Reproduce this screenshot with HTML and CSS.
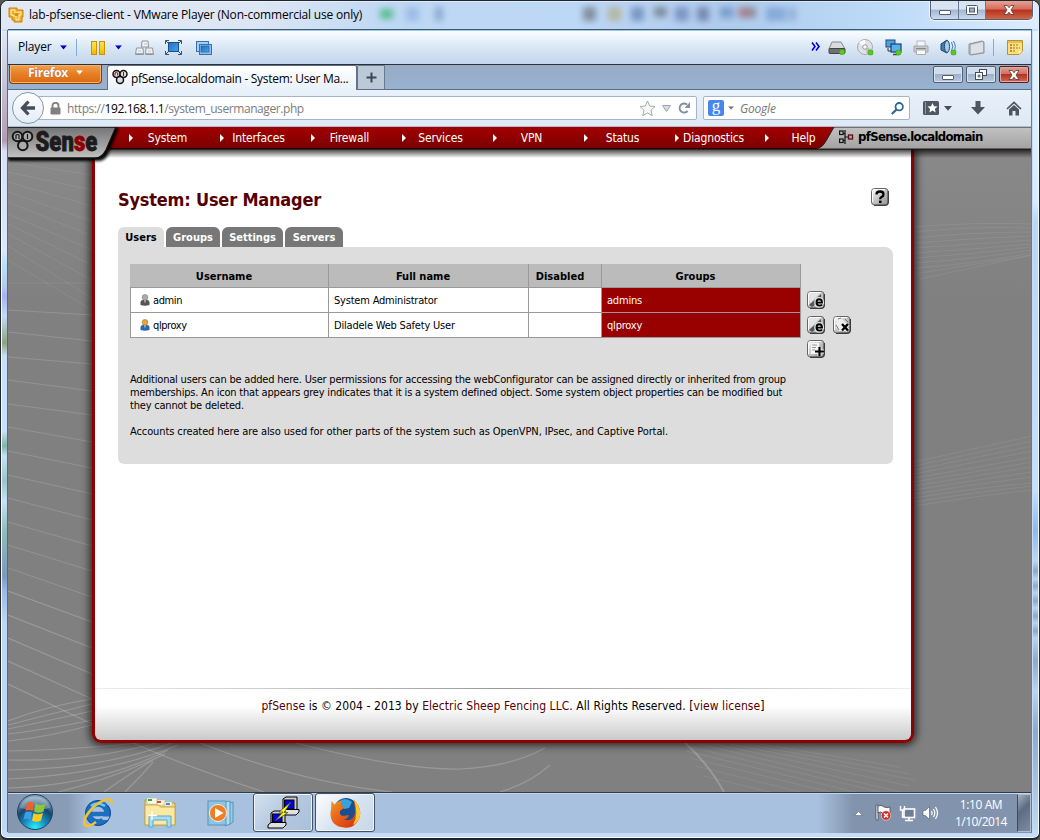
FILE: index.html
```html
<!DOCTYPE html>
<html lang="en">
<head>
<meta charset="utf-8">
<title>pfSense.localdomain - System: User Manager</title>
<link rel="stylesheet" href="styles.css">
</head>
<body>
<svg class="defs" width="0" height="0">
  <defs>
    <linearGradient id="btn" x1="0" y1="0" x2="1" y2="1"><stop offset="0" stop-color="#fff"/><stop offset=".5" stop-color="#c4c4c4"/><stop offset="1" stop-color="#8e8e8e"/></linearGradient>
    <linearGradient id="gold" x1="0" y1="0" x2="0" y2="1"><stop offset="0" stop-color="#ffe05a"/><stop offset=".5" stop-color="#ffd21c"/><stop offset="1" stop-color="#f0b400"/></linearGradient>
    <linearGradient id="blue" x1="0" y1="0" x2="1" y2="1"><stop offset="0" stop-color="#1b6fc0"/><stop offset="1" stop-color="#4aa3ec"/></linearGradient>
    <symbol id="plate" viewBox="0 0 18 18"><rect x=".5" y=".5" width="16.5" height="16.5" rx="3" fill="url(#btn)" stroke="#666"/><path d="M1.5 14V3.5Q1.5 1.500 3.500 1.500H14" fill="none" stroke="#fff"/><path d="M3 17.300H15Q17.300 17.300 17.300 15V3" fill="none" stroke="#222"/></symbol>
    <symbol id="edit" viewBox="0 0 18 18"><use href="#plate"/><path d="M2 14L14 3V7L9 13L5 16Z" fill="#555"/><path d="M2 2H13L3 12Z" fill="#e5e5e5"/><path d="M9 11.700H15.300C15.300 8.900 13.800 7.800 12.100 7.800C10.200 7.800 9 9.200 9 11.500C9 13.800 10.200 15 12.300 15C13.700 15 14.500 14.600 15.100 13.700" fill="none" stroke="#e4e4e4" stroke-width="3.600"/><path d="M9.500 11.600H15C15 9.200 13.800 8.300 12.200 8.300C10.500 8.300 9.500 9.500 9.500 11.500C9.500 13.500 10.600 14.600 12.400 14.600C13.600 14.600 14.400 14.300 15 13.600" fill="none" stroke="#000" stroke-width="1.900"/></symbol>
    <symbol id="cones" viewBox="0 0 16 16"><circle cx="4.500" cy="5" r="3.500" fill="#ddd" stroke="#111" stroke-width="1.500"/><circle cx="11.500" cy="5" r="3.500" fill="#ddd" stroke="#111" stroke-width="1.500"/><circle cx="8" cy="11" r="3.500" fill="#ddd" stroke="#111" stroke-width="1.500"/><path d="M3 6.500V4Q4.500 2.600 5.700 4V6.500" fill="none" stroke="#a00"/><path d="M11.500 3V7" stroke="#a00"/></symbol>
    <symbol id="user" viewBox="0 0 10 12"><path d="M.5 11V8Q.8 6 3 6H7Q9.200 6 9.500 8V11Q5 12.500 .5 11Z" fill="currentColor"/><path d="M4 6H6L5 9.500Z" fill="#ccc"/><circle cx="5" cy="3.300" r="2.900" fill="var(--head)" stroke="var(--rim)" stroke-width=".5"/></symbol>
    <symbol id="ok" viewBox="0 0 6 6"><circle cx="3" cy="3" r="2.800" fill="#5ac820" stroke="#368f10" stroke-width=".5"/></symbol>
    <symbol id="drop" viewBox="0 0 8 5"><path d="M0 0H8L4 4.800Z"/></symbol>
    <symbol id="cross" viewBox="0 0 12 10"><path d="M1 .5H4.200L6 2.700L7.800 .5H11L8 5L11 9.500H7.800L6 7.200L4.200 9.500H1L4 5Z" fill="#fff" stroke="#5a3537" stroke-width=".8"/></symbol>
  </defs>
</svg>

<div class="window">
  <i class="edge edge-l"></i><i class="edge edge-r"></i>
  <header class="titlebar">
    <i class="smudge s1"></i><i class="smudge s2"></i><i class="smudge s3"></i><i class="smudge s4"></i><i class="smudge s5"></i><i class="smudge s6"></i><i class="smudge s7"></i><i class="smudge s8"></i><i class="smudge s9"></i><i class="smudge s10"></i>
    <svg class="vm-logo" width="16" height="16" viewBox="0 0 16 16"><path d="M1 1H9V3H15V10H14V15H6V13H4V10H1Z" fill="#f2ad22" stroke="#c8810a"/><path d="M3 3H7V6H10V5H13V8H11V13H8V9H5V8H3Z" fill="none" stroke="#fff3c9"/><rect x="7" y="6" width="3" height="3" fill="#d98f10"/></svg>
    <span class="window-title">lab-pfsense-client - VMware Player (Non-commercial use only)</span>
    <div class="caption">
      <span class="cap cap-min"><i class="dash"></i></span>
      <span class="cap cap-max"><svg width="12" height="10" viewBox="0 0 12 10"><rect x=".5" y=".5" width="11" height="9" rx="1" fill="#fff" stroke="#505a6a"/><rect x="3.500" y="3" width="5" height="4" fill="#9ab0cc" stroke="#505a6a"/></svg></span>
      <span class="cap cap-close"><svg width="12" height="10" viewBox="0 0 12 10"><use href="#cross"/></svg></span>
    </div>
  </header>

  <div class="client">
    <div class="toolbar">
      <span class="player">Player</span>
      <svg class="t-drop" width="7" height="5" viewBox="0 0 8 5"><use href="#drop"/></svg>
      <i class="sep"></i>
      <svg class="t-pause" width="15" height="14" viewBox="0 0 15 14"><g fill="url(#gold)" stroke="#c89108"><rect x=".5" y=".5" width="5" height="13"/><rect x="8.500" y=".5" width="5" height="13"/></g></svg>
      <svg class="t-drop2" width="7" height="5" viewBox="0 0 8 5"><use href="#drop"/></svg>
      <svg class="t-keys" width="19" height="16" viewBox="0 0 19 16"><g fill="#f0f1f2" stroke="#90959b"><path d="M7 1H13L13.500 7H6.500Z"/><path d="M1.500 8H8L8.500 14.500H.5Z"/><path d="M11 8H17.500L18.500 14.500H10.500Z"/></g><path d="M1 13.500H8M11 13.500H18" stroke="#a5aab0"/><path d="M9 4H12M3 11H6M13 11H16" stroke="#c0c4c8"/></svg>
      <svg class="t-full" width="17" height="15" viewBox="0 0 17 15"><rect x="3.500" y="2.500" width="10" height="9" fill="url(#blue)" stroke="#174f8a"/><path d="M.5 4V.5H4M13 .5H16.500V4M16.500 11V14.500H13M4 14.500H.5V11M1 1L3 3M16 1L14 3M16 14L14 12M1 14L3 12" fill="none" stroke="#3d4e60"/></svg>
      <svg width="16" height="14" viewBox="0 0 16 14"><rect x=".5" y=".5" width="12" height="10" fill="#a8cdee" stroke="#3673ae"/><rect x="3.500" y="3.500" width="12" height="10" fill="#8cbce8" stroke="#3673ae"/><rect x="5" y="5" width="8" height="6" fill="url(#blue)" stroke="#1d5a98" stroke-width=".6"/></svg>
      <div class="devices">
        <svg class="chev" width="9" height="9" viewBox="0 0 9 9"><path d="M1 .5L4 4.500L1 8.500M5 .5L8 4.500L5 8.500" fill="none" stroke="#0000e0" stroke-width="1.600"/></svg>
        <svg width="18" height="16" viewBox="0 0 18 16"><path d="M4 2H13L17 9H1Z" fill="#d9dbdd" stroke="#888"/><rect x="1" y="8.500" width="16" height="5" rx="1" fill="#6e7276" stroke="#444"/><use href="#ok" x="11" y="9" width="6" height="6"/></svg>
        <svg width="17" height="17" viewBox="0 0 17 17"><circle cx="8" cy="8" r="7.500" fill="#e0e2e4" stroke="#a7abaf"/><path d="M8 8L2 3.500Q4 1 8 1Z" fill="#fff"/><path d="M8 8L15 10Q13 14 10 15Z" fill="#bfc3c7"/><circle cx="8" cy="8" r="2.300" fill="#f8f8f8" stroke="#999"/><use href="#ok" x="10.500" y="10.500" width="6" height="6"/></svg>
        <svg width="17" height="17" viewBox="0 0 17 17"><rect x="1" y="1" width="9" height="7" fill="#4ca0e4" stroke="#20486e"/><path d="M3 9V12H6" fill="none" stroke="#333"/><rect x="6" y="5" width="10" height="8" fill="#59b0f0" stroke="#203f60" stroke-width="1.200"/><path d="M8 15.500H14" stroke="#445" stroke-width="1.500"/><use href="#ok" x="10.500" y="10.500" width="6" height="6"/></svg>
        <svg width="16" height="16" viewBox="0 0 16 16"><rect x="4" y="1" width="8" height="6" fill="#f7f7f7" stroke="#b4b8bd"/><path d="M1 6H15V12H1Z" fill="#c7cacd" stroke="#a4a8ad"/><path d="M3.500 10H12.500V14.500H3.500Z" fill="#fafafa" stroke="#a9adb1"/><path d="M3 8.500H13" stroke="#888"/></svg>
        <svg width="17" height="17" viewBox="0 0 17 17"><path d="M1 5L7 1Q10 8 7 14L1 11Z" fill="#3e7db6" stroke="#1b4469"/><ellipse cx="7" cy="7.500" rx="2.500" ry="6" fill="#a9cde9" stroke="#234b70"/><path d="M11.500 3Q14 7.500 11.500 12M13.500 2Q17 8 13.500 13" fill="none" stroke="#3e80ba"/><use href="#ok" x="10.500" y="10.500" width="6" height="6"/></svg>
        <svg width="17" height="16" viewBox="0 0 17 16"><path d="M1 4L14 1L16 2V13L3 15L1 14Z" fill="#b3b8bd" stroke="#8d949b"/><path d="M3 5L15 2V12L3 14Z" fill="#dde1e4"/></svg>
        <i class="sep dark"></i>
        <svg width="16" height="15" viewBox="0 0 16 15"><path d="M.5.5H15.500V11L12 14.500H.5Z" fill="#fbe07c" stroke="#b09337"/><path d="M1 1H15V3H1Z" fill="#e6c04d"/><path d="M3 5H5M3 8H5M3 11H5" stroke="#dd5a2c" stroke-width="1.300"/><path d="M6 5H12M6 8H13M6 11H9" stroke="#8a7a48" stroke-dasharray="2 1"/><path d="M12 14V11H15Z" fill="#fff6c0"/></svg>
      </div>
    </div>

    <div class="tabstrip">
      <span class="firefox-button">Firefox <svg width="7" height="5" viewBox="0 0 8 5"><use href="#drop"/></svg></span>
      <span class="browser-tab"><svg width="16" height="16"><use href="#cones"/></svg><span>pfSense.localdomain - System: User Ma...</span></span>
      <span class="new-tab"><svg width="11" height="11" viewBox="0 0 11 11"><path d="M5.500 .5V10.500M.5 5.500H10.500" stroke="#3c4650" stroke-width="2"/></svg></span>
      <div class="inner-caption">
        <span class="icap"><i class="dash"></i></span>
        <span class="icap"><svg width="12" height="11" viewBox="0 0 12 11"><g fill="#fff" stroke="#414c5c"><rect x="4.500" y=".5" width="7" height="6"/><rect x=".5" y="3.500" width="7" height="7"/></g><rect x="3" y="6" width="2" height="2" fill="#8da5bf" stroke="#414c5c" stroke-width=".6"/></svg></span>
        <span class="icap iclose"><svg width="12" height="10" viewBox="0 0 12 10"><use href="#cross"/></svg></span>
      </div>
    </div>

    <div class="navbar">
      <div class="location">
        <svg class="lock" width="11" height="13" viewBox="0 0 11 13"><path d="M2.500 6V3.800A3 3 0 0 1 8.500 3.800V6" fill="none" stroke="#808080" stroke-width="1.800"/><rect x=".5" y="5.500" width="10" height="7" rx="1" fill="#808080"/></svg>
        <span class="url">https://<b>192.168.1.1</b>/system_usermanager.php</span>
        <svg class="star" width="17" height="17" viewBox="0 0 17 17"><path d="M8.500 1L10.700 6L16 6.500L12 10.200L13.200 15.700L8.500 12.900L3.800 15.700L5 10.200L1 6.500L6.300 6Z" fill="#f6f7f8" stroke="#a3a9b0"/></svg>
        <svg class="hist" width="9" height="7" viewBox="0 0 9 7"><path d="M.5 .5H8.500L4.500 6.500Z" fill="#d6dce4" stroke="#9aa5b2"/></svg>
        <svg class="reload" width="13" height="12" viewBox="0 0 13 12"><path d="M9 2.600A4.500 4.500 0 1 0 9.600 9" fill="none" stroke="#8390a0" stroke-width="2"/><path d="M12 0V6H6.500Z" fill="#8390a0"/></svg>
      </div>
      <span class="back"><svg width="16" height="16" viewBox="0 0 16 16"><path d="M8.500 1.500L2.500 8L8.500 14.500M3 8H15" fill="none" stroke="#434e5a" stroke-width="3.300"/></svg></span>
      <div class="search">
        <span class="g-logo">g</span>
        <svg class="g-drop" width="6" height="4" viewBox="0 0 8 5"><use href="#drop"/></svg>
        <span class="g-text">Google</span>
        <svg class="lens" width="13" height="13" viewBox="0 0 13 13"><circle cx="8.200" cy="4.700" r="3.700" fill="none" stroke="#2d6798" stroke-width="1.800"/><path d="M5.500 7.500L.8 12" stroke="#2d6798" stroke-width="2.200"/></svg>
      </div>
      <svg class="n-book" width="16" height="14" viewBox="0 0 16 14"><rect width="16" height="14" rx="1.500" fill="#4d5863"/><path d="M2.500 1V13" stroke="#8f99a3"/><path d="M9.500 2L11 5.300L14.500 5.600L11.900 8L12.700 11.500L9.500 9.600L6.300 11.500L7.100 8L4.500 5.600L8 5.300Z" fill="#fff"/></svg>
      <svg class="n-bdrop" width="8" height="5" viewBox="0 0 8 5"><use href="#drop"/></svg>
      <svg class="n-down" width="14" height="14" viewBox="0 0 14 14"><path d="M4.500 0H9.500V6H14L7 13.500L0 6H4.500Z" fill="#4b5661"/></svg>
      <svg class="n-home" width="16" height="15" viewBox="0 0 16 15"><path d="M1 8L8 1.500L15 8" fill="none" stroke="#4b5661" stroke-width="1.700"/><path d="M3 8.500L8 4L13 8.500V14.500H9.500V10H6.500V14.500H3Z" fill="#4b5661"/></svg>
    </div>

    <main class="page">
      <svg class="swirl" width="1024" height="665" viewBox="8 127 1024 665">
        <g fill="none" stroke="#fff" stroke-opacity=".08">
          <path d="M8 162L92 175M8 172L92 190M8 182L92 206M8 192L92 221M8 202L92 236M8 214L92 250M8 224L92 265M8 234L92 280M8 246L92 298M8 260L92 310M8 283H92"/>
          <path d="M914 227Q970 222 1032 224M914 232Q970 226 1032 228M914 238Q975 232 1032 232M914 243Q975 238 1032 236M914 248Q975 244 1032 240M914 253Q975 249 1032 244M914 258Q975 254 1032 247M914 263Q975 259 1032 250M914 268Q975 264 1032 253M914 274L1032 255M920 279L1032 255"/>
          <path d="M914 462L1032 436M914 466L1032 441M914 470L1032 446M914 474L1032 451M914 478Q975 468 1032 457M914 482Q975 472 1032 462M914 486Q975 476 1032 467M914 490Q975 480 1032 472M914 494Q975 484 1032 477M914 498Q975 488 1032 483M914 502Q975 492 1032 486M914 506Q975 496 1032 490"/>
          <path d="M700 744L900 792M715 744L910 786M730 744L915 780M745 744L910 774M760 744L900 767M690 747L880 792M686 751L855 792M690 758L830 792M696 766L800 792M704 776L770 792"/>
        </g>
        <g fill="none" stroke="#fff" stroke-opacity=".15">
          <path d="M8 310L92 315M8 332L92 341M8 357L92 364M8 380L92 391M8 404L92 415M8 427L92 442M8 451L92 468M8 475L92 494M8 498L92 520M8 522L92 546M8 545L92 571M8 568L92 597"/>
        </g>
        <g fill="none" stroke="#fff" stroke-opacity=".2" stroke-width="1.200">
          <path d="M8 591L92 622M8 615L92 648M8 638L92 674M8 661L92 699M8 684L92 724Q160 758 264 792M200 743Q300 782 392 792M292 742Q400 770 460 769Q510 767 545 748M500 792Q530 783 550 765"/>
          <path d="M8 721Q46 706 92 699M8 725Q50 714 92 704M8 729Q52 720 92 711M8 734Q50 729 92 720M8 741Q50 737 95 724M8 751Q88 749 145 742M8 760Q90 762 160 742M8 770Q102 769 172 743M8 779Q110 774 178 745M8 788Q100 785 168 750M58 792Q112 779 165 754M104 792Q138 768 160 756M125 792Q142 775 153 762"/>
          <path d="M684 742Q708 763 724 792" stroke-width="2"/>
        </g>
      </svg>
      <div class="pf-head">
        <svg class="pf-bar" width="1024" height="40" viewBox="0 0 1024 40">
          <defs>
            <linearGradient id="red" x1="0" y1="0" x2="0" y2="1"><stop offset="0" stop-color="#a00000"/><stop offset=".55" stop-color="#8f0000"/><stop offset="1" stop-color="#780000"/></linearGradient>
            <linearGradient id="grey" x1="0" y1="0" x2="0" y2="1"><stop offset="0" stop-color="#c2c2c2"/><stop offset="1" stop-color="#a2a2a2"/></linearGradient>
            <linearGradient id="badge" x1="0" y1="0" x2="0" y2="1"><stop offset="0" stop-color="#737373"/><stop offset="1" stop-color="#c2c2c2"/></linearGradient>
            <linearGradient id="shade" x1="0" y1="0" x2="0" y2="1"><stop offset="0" stop-color="#000" stop-opacity=".85"/><stop offset="1" stop-color="#000" stop-opacity="0"/></linearGradient>
            <filter id="soft" x="-10%" y="-10%" width="120%" height="140%"><feGaussianBlur stdDeviation="1.800"/></filter>
          </defs>
          <rect y="21" width="1024" height="10" fill="url(#shade)"/>
          <rect width="1024" height="21" fill="url(#red)"/><rect y="21" width="1024" height="1.500" fill="#260000"/>
          <path d="M809 22Q815 20 818 14L826 0H1025V22Z" fill="url(#grey)" stroke="#222"/>
          <path d="M0 1H111L101 25Q98 34 90 34H0Z" filter="url(#soft)"/>
          <path d="M-1 0H108L98 23Q94 31 87 31H-1Z" fill="url(#badge)" stroke="#111" stroke-width="1.400"/>
          <g fill="#aaa" stroke="#151515" stroke-width="2"><circle cx="9.500" cy="9.500" r="4.800"/><circle cx="19.500" cy="9.500" r="4.800"/><circle cx="14.800" cy="18.500" r="4.800"/></g>
          <path d="M8 12V8Q9.500 7 11 8V12M19.500 7V12" fill="none" stroke="#151515" stroke-width="1.200"/>
          <text class="logo-word" transform="translate(27.500 23.500) scale(.82 1)">Sen<tspan fill="#8c0000" stroke="#8c0000">s</tspan>e</text>
        </svg>
        <nav class="menu"><a>System</a><a>Interfaces</a><a>Firewall</a><a>Services</a><a>VPN</a><a>Status</a><a>Diagnostics</a><a>Help</a></nav>
        <div class="host"><svg width="15" height="14" viewBox="0 0 15 14"><path d="M6 0V14M6 7H10M1 3.500H6M1 10.500H6" fill="none" stroke="#111" stroke-width="1.200"/><g fill="#bbb" stroke="#111" stroke-width="1.200"><rect x=".6" y="1" width="3.500" height="3.500"/><rect x=".6" y="9" width="3.500" height="3.500"/></g><rect x="9.500" y="5" width="4" height="4" fill="#d99" stroke="#511" stroke-width="1.300"/></svg><span>pfSense.localdomain</span></div>
      </div>

      <section class="sheet">
        <div class="heading">
          <h1>System: User Manager</h1>
          <svg width="18" height="18" viewBox="0 0 18 18"><use href="#plate"/><path d="M5.500 6.500Q5.500 3.500 9 3.500Q12.500 3.500 12.500 6.500Q12.500 8.200 10.500 9Q9.200 9.600 9.200 11.300" fill="none" stroke="#000" stroke-width="2.300"/><rect x="8" y="12.600" width="2.500" height="2.500"/></svg>
        </div>
        <div class="tabs"><span class="on">Users</span><span>Groups</span><span>Settings</span><span>Servers</span></div>
        <div class="panel">
          <div class="users">
            <table>
              <colgroup><col class="c1"><col class="c2"><col class="c3"><col class="c4"></colgroup>
              <tr><th>Username</th><th>Full name</th><th class="dis">Disabled</th><th>Groups</th></tr>
              <tr><td class="name"><svg class="sys" width="10" height="12"><use href="#user"/></svg>admin</td><td>System Administrator</td><td></td><td class="grp">admins</td></tr>
              <tr><td class="name"><svg class="reg" width="10" height="12"><use href="#user"/></svg>qlproxy</td><td>Diladele Web Safety User</td><td></td><td class="grp">qlproxy</td></tr>
            </table>
            <div class="actions">
              <div><svg width="18" height="18"><use href="#edit"/></svg></div>
              <div><svg width="18" height="18"><use href="#edit"/></svg><svg width="18" height="18" viewBox="0 0 18 18"><use href="#plate"/><path d="M4 3H9L14 8V15H6L3 12Z" fill="#eee"/><path d="M5 3L8 2M12 3L15 6M3 9L6 14" stroke="#777"/><path d="M9 8L15 14.500M15 8L9 14.500" stroke="#eee" stroke-width="4.500"/><path d="M9 8L15 14.500M15 8L9 14.500" stroke="#000" stroke-width="2.400"/></svg></div>
              <div><svg width="18" height="18" viewBox="0 0 18 18"><use href="#plate"/><path d="M4 3H12V14H4Z" fill="#f7f7f7"/><path d="M5 5H10M5 7.500H9M5 10H8" stroke="#999"/><path d="M8 11.500H17M12.500 7V16" stroke="#eee" stroke-width="4"/><path d="M8 11.500H17M12.500 7V16" stroke="#000" stroke-width="2.200"/></svg></div>
            </div>
          </div>
          <p class="note">Additional users can be added here. User permissions for accessing the webConfigurator can be assigned directly or inherited from group<br>memberships. An icon that appears grey indicates that it is a system defined object. Some system object properties can be modified but<br>they cannot be deleted.</p>
          <p class="note accounts">Accounts created here are also used for other parts of the system such as OpenVPN, IPsec, and Captive Portal.</p>
        </div>
        <footer><a>pfSense</a> is © 2004 - 2013 by <a>Electric Sheep Fencing LLC</a>. All Rights Reserved. [<a>view license</a>]</footer>
      </section>
    </main>

    <div class="taskbar">
      <svg class="orb" width="38" height="38" viewBox="0 0 38 38"><defs><radialGradient id="orbg" cx=".5" cy=".95" r=".85"><stop offset="0" stop-color="#2ff0ff"/><stop offset=".35" stop-color="#1593c8"/><stop offset=".7" stop-color="#16466e"/><stop offset="1" stop-color="#7f9fb8"/></radialGradient></defs><circle cx="19" cy="19" r="17.500" fill="url(#orbg)" stroke="#24415e"/><path d="M4 15A15.500 15.500 0 0 1 34 15Q19 19 4 15Z" fill="#fff" opacity=".25"/><path d="M11 10Q14.500 8 18 10L16.500 18Q13 16 9.500 18Z" fill="#f0602a"/><path d="M19.500 10.500Q23.500 13 29.500 11L27.500 18.500Q22.500 21 18 18.500Z" fill="#8cc63c"/><path d="M9 19.500Q12.500 17.500 16 19.500L14.500 27Q11 25 7.500 26.500Z" fill="#3e9ce8"/><path d="M17.600 20Q21.500 22.500 27 20L25 27.500Q20.500 30 16 27.500Z" fill="#fcc91d"/></svg>
      <svg class="ie" width="34" height="32" viewBox="0 0 34 32"><circle cx="17" cy="16" r="9.500" fill="none" stroke="#1c6fc0" stroke-width="6.500"/><path d="M8 17H29" stroke="#1c6fc0" stroke-width="4.500"/><path d="M19 19.500H31V23H22Z" fill="#a8c1de"/><circle cx="17" cy="16" r="12.500" fill="none" stroke="#0d4b94" stroke-dasharray="64 6 10"/><path d="M10 9Q16 4 24 9" fill="none" stroke="#6cc7f5" stroke-width="2.500"/><path d="M31 6Q31 1 24 3C12 7 0 23 4 28Q7 31 15 25" fill="none" stroke="#f2c230" stroke-width="2.600"/></svg>
      <svg class="folder" width="34" height="30" viewBox="0 0 34 30"><path d="M2 2H12L14 5H32V27H2Z" fill="#f0d98a" stroke="#b89a48"/><path d="M4 0H14V6H4ZM14 2H22V7H14ZM21 4H29V8H21Z" fill="#fffdf0" stroke="#cdb876" stroke-width=".6"/><path d="M5 2H9" stroke="#2ea84a" stroke-width="2"/><path d="M14 4H18" stroke="#d44" stroke-width="2"/><path d="M23 6H27" stroke="#3a8ed8" stroke-width="2"/><path d="M2 7H15L18 9H32V27H2Z" fill="#fae9a2" stroke="#c7a950"/><path d="M6 29V18H28V29H24V22H10V29Z" fill="#a8dcf2" stroke="#5fa7cb"/><path d="M9 13V22M5 17.500H14" stroke="#fff" stroke-width="1.300"/></svg>
      <svg class="media" width="30" height="28" viewBox="0 0 30 28"><path d="M22 4L26 3V23L22 26Z" fill="#9acbe4" stroke="#5796b8"/><path d="M18 3L23 2V25L18 27Z" fill="#b5ddf0" stroke="#5796b8"/><rect x="1" y="2" width="18" height="24" fill="#8dc4e2" stroke="#5796b8"/><circle cx="11" cy="14" r="8.500" fill="#f47c20" stroke="#fff" stroke-width=".8"/><path d="M8 9L16.500 14L8 19Z" fill="#fff"/></svg>
      <span class="task putty"><svg width="33" height="33" viewBox="0 0 33 33"><g stroke="#000"><path d="M16 3L19 1H30V13L27 15H16Z" fill="#ccc"/><rect x="17.500" y="4" width="9.500" height="9" fill="#0000e0"/><path d="M15 16L18 13.500H32V16L29 19H15Z" fill="#e0e0e0"/><path d="M4 17L7 15H18V26L15 28H4Z" fill="#ccc"/><rect x="5.500" y="18" width="9.500" height="8" fill="#0000e0"/><path d="M1 29L4 26.500H19V29L16 32H1Z" fill="#e0e0e0"/></g><path d="M24 6L12 16H16L8 25L21 16.500H17Z" fill="#ff0" stroke="#444" stroke-width=".7"/></svg></span>
      <span class="task fox"><svg width="32" height="32" viewBox="0 0 32 32"><defs><linearGradient id="fur" x1="0" y1="0" x2="1" y2="1"><stop offset="0" stop-color="#f49a20"/><stop offset=".5" stop-color="#e85a18"/><stop offset="1" stop-color="#c82e16"/></linearGradient></defs><circle cx="17" cy="13" r="12" fill="#184f90"/><path d="M9 5Q16-1 23 5L20 11L15 12Z" fill="#3aa2da"/><path d="M25 3Q34 12 30 22Q25 32 15 30.500C4 30 0 21 2 13L2.500 4L6 8Q8 4 12 4L12 9L16 10L11 14Q10 20 17 18.500L20 18Q19 22 15 22.500C20 25 26 21 26 15Q26 9 25 3Z" fill="url(#fur)"/><path d="M25 3Q34 12 30 22Q28 26 24 28Q30 17 25 3Z" fill="#fbc92c"/></svg></span>
      <div class="tray">
        <svg class="up" width="9" height="5" viewBox="0 0 9 5"><path d="M.5 4.500L4.500 .5L8.500 4.500Z" fill="#fff" stroke="#59687c" stroke-width=".6"/></svg>
        <svg class="flag" width="17" height="18" viewBox="0 0 17 18"><path d="M1 1H3V16H1Z" fill="#fff" stroke="#3c4656" stroke-width=".8"/><path d="M3 2Q6 0 9 3Q12 4 15 3V10Q11 12 8 9Q5 7 3 9Z" fill="#fff" stroke="#3c4656" stroke-width=".8"/><circle cx="11" cy="11.500" r="4.700" fill="#d9291e" stroke="#fff" stroke-width=".5"/><path d="M9 9.500L13 13.500M13 9.500L9 13.500" stroke="#fff" stroke-width="1.600"/></svg>
        <svg class="net" width="17" height="17" viewBox="0 0 17 17"><rect x="5" y="4" width="10.500" height="8.500" fill="#6d7d92" stroke="#fff" stroke-width="1.600"/><path d="M10 13V15.500M6 15.500H14" stroke="#fff" stroke-width="1.500"/><path d="M1.500 1V5H5.500V1M3.500 5V12H6" fill="none" stroke="#fff" stroke-width="1.400"/></svg>
        <svg class="vol" width="17" height="16" viewBox="0 0 17 16"><path d="M1 5.500H3.500L7.500 1.500V14.500L3.500 10.500H1Z" fill="#fff" stroke="#4b586a" stroke-width=".6"/><path d="M9.500 6Q10.700 8 9.500 10M11.500 4Q14 8 11.500 12M13.500 2Q17.500 8 13.500 14" fill="none" stroke="#fff" stroke-width="1.200"/></svg>
        <div class="clock"><span>1:10 AM</span><span class="date">1/10/2014</span></div>
        <i class="peek"></i>
      </div>
    </div>
  </div>
</div>
</body>
</html>
```
FILE: styles.css
```css
* { box-sizing: border-box; }
body { margin: 0; width: 1040px; height: 840px; overflow: hidden; background: #55564f; color: #000; }
svg { display: block; flex: none; }
.defs { position: absolute; }

.window, .titlebar, .toolbar, .tabstrip, .navbar, .taskbar { font-family: "Open Sans", "Noto Sans", sans-serif; font-size: 12px; }
.window { position: relative; width: 1040px; height: 840px; padding: 0 7px 7px; border: 1px solid #20262e; border-width: 1px 1px 2px 1px; border-radius: 8px 8px 7px 7px; background: #c4dcf5; box-shadow: inset 0 0 0 1px #f1f8ff; overflow: hidden; }
.edge { position: absolute; top: 30px; bottom: 8px; width: 5px; }
.edge-l { left: 1px; background: linear-gradient(#dce7f7, #b39bb3 110px, #d7e0f8 120px, #dce7fa 220px, #c1e0fb 230px, #b4cdec 255px, #a6b0ee 265px, #c1dcfa 285px, #8fa37c 312px, #c9e0fa 325px, #c9e0fa 400px, #7eb5a8 415px, #c9e0fa 425px, #9cc5c9 450px, #c9e0fa 470px, #8fbdba 500px, #7e98c0 545px, #9cb8e4 560px, #bdd7f4 590px); }
.edge-r { right: 1px; background: linear-gradient(#e2f2ff, #d8ecff 170px, #b9d7f5 190px, #c3e0fb 460px, #8fb9ec 500px, #bcd7f3 530px, #8ea6cb 540px, #b8d4f0 548px, #8fa8cc 555px, #b8d4f0 562px, #8fa8cc 570px, #b8d4f0 577px, #8fa8cc 585px, #b8d4f0 592px, #8fa8cc 600px, #b8d4f0 607px, #8fa8cc 630px, #bad5f1 660px, #8fa8cc 700px, #bed9f5); }

.titlebar { position: relative; display: flex; align-items: flex-start; height: 28px; margin: 0 -7px; padding: 6px 10px 0 7px; background: linear-gradient(#fff 0, transparent 1px), linear-gradient(90deg, #e2e8f3 0, #dce6f4 25%, #bed7f3 38%, #bdd7f6 55%, #afcbec 70%, #bddaf8 85%, #dcecfd 100%); }
.vm-logo { margin-right: 5px; }
.window-title { font-size: 12px; line-height: 16px; letter-spacing: -0.19px; white-space: nowrap; }
.smudge { position: absolute; top: 6px; width: 13px; height: 14px; filter: blur(3px); opacity: .65; }
.s1 { left: 379px; top: 8px; height: 10px; background: #24b35c; }
.s2 { left: 405px; background: #8caee0; }
.s3 { left: 434px; width: 8px; background: #7792bd; }
.s4 { left: 582px; background: #676d70; }
.s5 { left: 607px; background: #b3a978; }
.s6 { left: 630px; background: #5a7aa8; }
.s7 { left: 653px; background: #626973; height: 10px; }
.s8 { left: 674px; width: 34px; background: linear-gradient(90deg, #6277ad 35%, transparent 45%, transparent 60%, #56678f 70%); }
.s9 { left: 719px; width: 36px; height: 11px; background: linear-gradient(90deg, #5f86b8 30%, transparent 45%, #a6544f 60%, #76727c); }
.s10 { left: 765px; width: 30px; background: linear-gradient(90deg, #6f97cc 60%, #9fbfe6 70%, #7590bb); }
.caption { position: absolute; top: 0; right: 6px; display: flex; height: 19px; border: 1px solid #55627a; border-top: 0; border-radius: 0 0 5px 5px; overflow: hidden; box-shadow: 0 0 1px 1px #eef6ff; }
.cap { display: flex; align-items: center; justify-content: center; width: 28px; background: linear-gradient(#d8e4f2 45%, #a2b6d1 50%, #cadbf0); border-right: 1px solid #6b7990; }
.cap-max { width: 27px; }
.cap-close { width: 46px; border: 0; background: linear-gradient(#e6a294, #d66c5c 45%, #b8311d 50%, #cf6745); }
.dash { display: block; width: 12px; height: 5px; background: #fff; border: 1px solid #535d6e; border-radius: 1px; margin-top: 5px; }

.client { position: relative; display: flex; flex-direction: column; height: 804px; border: 1px solid #6b7b8e; border-top-color: #3f5a72; border-width: 1px 1px 1px 0; }
.client::before { content: ""; position: absolute; left: -1px; top: 0; bottom: 0; width: 1px; background: #5d6978; }
.toolbar { display: flex; align-items: center; height: 35px; padding: 0 8px 0 10px; background: linear-gradient(#fafdff, #dce9f6 45%, #c1d5ea); border-top: 1px solid #9cc8ea; border-bottom: 1px solid #2c333c; }
.player { letter-spacing: -0.2px; width: 42px; margin-top: -3px; }
.t-drop, .t-drop2 { fill: #0000c8; }
.sep { width: 1px; height: 17px; background: #87abd0; margin: 0 14px 0 9px; }
.t-drop2 { margin: 0 13px 0 9px; }
.t-keys { margin-right: 11px; }
.t-full { margin-right: 14px; }
.devices { display: flex; align-items: center; gap: 11px; margin-left: auto; }
.devices .sep { margin: 0 2px 0 -3px; }
.chev { margin-right: -3px; margin-top: -3px; }

.tabstrip { display: flex; height: 25px; background: linear-gradient(#98abc3, #97b2d1); border-bottom: 1px solid #5c6f86; }
.firefox-button { display: flex; align-items: center; gap: 8px; width: 93px; height: 19px; margin-left: 1px; padding: 0 0 4px 18px; border: 1px solid #8b3d09; border-top: 0; border-radius: 0 0 4px 4px; background: linear-gradient(#f0a14c, #e67e22 50%, #dc6b0f); box-shadow: inset 0 0 0 1px #f4b371; color: #fff; font-weight: bold; letter-spacing: -0.25px; text-shadow: 0 0 1px #944; fill: #fff; }
.browser-tab { display: flex; align-items: center; gap: 3px; width: 251px; height: 25px; margin-left: 5px; padding-left: 4px; background: linear-gradient(#fff, #e9f1fa); border: 1px solid #61738b; border-width: 1px 2px 0 1px; border-radius: 3px 3px 0 0; white-space: nowrap; letter-spacing: -0.29px; }
.browser-tab svg { margin-top: -2px; }
.new-tab { display: flex; align-items: center; justify-content: center; width: 27px; border: 1px solid #687a90; border-width: 1px 1px 0 0; background: #bccad8; }
.inner-caption { display: flex; gap: 3px; margin: 1px 2px 0 auto; }
.icap { display: flex; align-items: center; justify-content: center; width: 30px; height: 17px; border: 1px solid #506078; border-radius: 2px; background: linear-gradient(#cfdceb 45%, #9fb2ca 50%, #b7cade); box-shadow: inset 0 0 0 1px #d7e3ef; }
.iclose { background: linear-gradient(#dba297, #d2705f 45%, #b43221 50%, #cf6c50); border-color: #5a1e22; box-shadow: inset 0 0 0 1px #dcaaa5; }

.navbar { display: flex; align-items: center; height: 37px; padding-right: 9px; background: linear-gradient(#e9f1fa, #dde9f5); border-bottom: 1px solid #b0bccb; }
.location { display: flex; align-items: center; order: 2; width: 661px; height: 24px; margin-left: -8px; padding-left: 13px; background: #fff; border: 1px solid #a5b4c7; border-radius: 2px; }
.url { margin-left: 6px; color: #7c7c7c; letter-spacing: -0.42px; letter-spacing: -0.42px; white-space: nowrap; }
.url b { font-weight: normal; color: #000; }
.star { margin-left: auto; }
.hist { margin: 0 7px 0 6px; }
.reload { margin-right: 5px; }
.back { order: 1; position: relative; display: flex; align-items: center; justify-content: center; width: 32px; height: 32px; margin-left: 4px; border: 1px solid #8797aa; border-radius: 50%; background: linear-gradient(#fff, #e3ecf5); }
.search { order: 3; display: flex; align-items: center; width: 207px; height: 24px; margin-left: 6px; padding: 0 5px 0 4px; background: #fff; border: 1px solid #a5b4c7; border-radius: 2px; }
.g-logo { width: 16px; height: 16px; border-radius: 2px; background: #4787ed; color: #fff; font: 17px/12px "Liberation Serif", serif; text-align: center; }
.g-drop { margin: 0 6px 0 4px; fill: #777; }
.g-text { font-style: italic; color: #777; letter-spacing: -0.2px; }
.lens { margin-left: auto; }
.n-book { order: 4; margin-left: 13px; }
.n-bdrop { order: 5; margin-left: 5px; fill: #434e5a; }
.n-down { order: 6; margin-left: 19px; }
.n-home { order: 7; margin-left: auto; }

.page { position: relative; flex: none; height: 665px; display: flex; flex-direction: column; overflow: hidden; background: linear-gradient(#8a8a8a, #808080 180px); font-family: "DejaVu Sans Condensed", "DejaVu Sans", sans-serif; font-size: 11px; }
.swirl, .pf-bar { position: absolute; left: 0; top: 0; }
.pf-head { position: relative; z-index: 2; display: flex; height: 22px; }
.logo-word { font: 900 27px Roboto, "Open Sans", sans-serif; fill: #1c1c1c; stroke: #1c1c1c; stroke-width: .8px; }
.menu { position: relative; display: grid; grid-template-columns: repeat(8, 91px); width: 711px; margin-left: 114px; font-size: 12px; color: #fff; line-height: 23px; letter-spacing: -0.15px; text-align: center; }
.menu a { position: relative; }
.menu a::before { content: ""; position: absolute; left: 7px; top: 7px; border: 4px solid transparent; border-left: 4px solid #fff; border-right: 0; }
.menu a:last-child { left: -1px; }
.host { position: relative; display: flex; align-items: center; gap: 4px; margin-left: 6px; height: 20px; font-size: 13px; font-weight: bold; letter-spacing: -0.66px; }
.host span { margin-top: -2px; }

.sheet { position: relative; display: flex; flex-direction: column; width: 822px; height: 594px; margin-left: 84px; padding: 38px 18px 0 23px; background: linear-gradient(#fff 557px, #c8c8c8 592px); border: 3px solid #900000; border-top: 0; border-radius: 0 0 9px 9px; box-shadow: 0 0 9px 2px #000b; }
.heading { display: flex; justify-content: space-between; align-items: flex-start; height: 40px; padding-right: 4px; }
.heading svg { margin-top: 1px; }
h1 { margin: 0; font-size: 18px; line-height: 25px; color: #500; letter-spacing: -0.2px; }
.tabs { display: flex; gap: 2px; height: 20px; font-size: 11px; font-weight: bold; line-height: 22px; text-align: center; color: #fff; }
.tabs span { width: 54px; background: #777; border-radius: 6px 6px 0 0; }
.tabs .on { width: 46px; background: #ddd; color: #000; }
.tabs span:nth-child(3) { width: 61px; }
.tabs span:nth-child(4) { width: 58px; }
.panel { width: 775px; height: 217px; padding: 17px 12px 0; background: #ddd; border-radius: 0 8px 6px 6px; }
.users { display: flex; height: 109px; }
table { width: 671px; height: 74px; table-layout: fixed; border-collapse: separate; border-spacing: 0; flex: none; }
.c1, .c4 { width: 199px; }
.c2 { width: 200px; }
.c3 { width: 73px; }
th, td { padding: 1px 0 0 5px; border: solid #999; border-width: 0 1px 1px 0; white-space: nowrap; line-height: 13px; }
th { height: 24px; padding: 1px 11px 0 0; background: #bbb; }
th:nth-child(1) { padding-right: 10px; }
th.dis { padding-right: 10px; }
td { height: 25px; background: #fff; text-align: left; letter-spacing: -0.2px; }
td:first-child { border-left-width: 1px; }
td.name { padding: 0 0 0 9px; letter-spacing: -0.4px; }
.name svg { display: inline-block; vertical-align: -2px; margin-right: 3px; }
.sys { color: #555; --head: #aaa; --rim: #777; }
.reg { color: #2c68ac; --head: #e9a33c; --rim: #a56a18; }
td.grp { background: #900; color: #fff; }
.actions { display: flex; flex-direction: column; gap: 7px; padding: 27px 0 0 6px; }
.actions div { display: flex; gap: 8px; }
.actions div + div + div { margin-top: -1px; }
.note { margin: 0 0 13px; line-height: 13px; letter-spacing: -0.2px; white-space: nowrap; }
.accounts { letter-spacing: -0.1px; }
footer { margin: auto -18px 0 -23px; height: 52px; padding: 10px 0 0 20px; border-top: 1px solid; border-image: linear-gradient(90deg, #eee, #999 50%, #eee) 1; text-align: center; font-size: 12px; line-height: 15px; letter-spacing: 0.07px; }
footer a { color: #500; }

.taskbar { display: flex; align-items: center; height: 41px; margin-bottom: -1px; background: linear-gradient(90deg, #8497af 0, #899db7 60px, #a8c1de 85px, #a8c1de 810px, #8294ad 845px); border-top: 1px solid #313d4d; box-shadow: inset 0 1px #c3d5e9; color: #fff; }
.orb { margin: -2px 0 0 8px; }
.ie { margin-left: 27px; }
.folder { margin-left: 28px; }
.media { margin-left: 30px; }
.task { display: flex; align-items: center; justify-content: center; width: 60px; height: 39px; margin-top: -1px; border: 1px solid #445265; border-radius: 3px; box-shadow: inset 0 0 0 1px #eef4fa; background: linear-gradient(135deg, #d5e1ef, #b5c9e0 50%, #a9bfd9); }
.putty { margin-left: 16px; }
.fox { margin-left: 2px; background: linear-gradient(135deg, #fff, #d8e4f1 50%, #c6d6e9); }
.tray { display: flex; align-items: center; margin-left: auto; height: 39px; }
.flag { margin-left: 12px; }
.net { margin-left: 7px; }
.vol { margin-left: 6px; }
.clock { display: flex; flex-direction: column; align-items: center; width: 52px; margin-left: 16px; line-height: 17px; font-size: 12px; letter-spacing: -0.4px; white-space: nowrap; }
.date { letter-spacing: -0.55px; }
.peek { width: 14px; height: 38px; margin-left: 10px; border: 1px solid #b0bdcc; border-left-color: #3f4b5c; background: linear-gradient(135deg, #a3b1c2, #5d6c80 40%, #7b8ca2); }
```
